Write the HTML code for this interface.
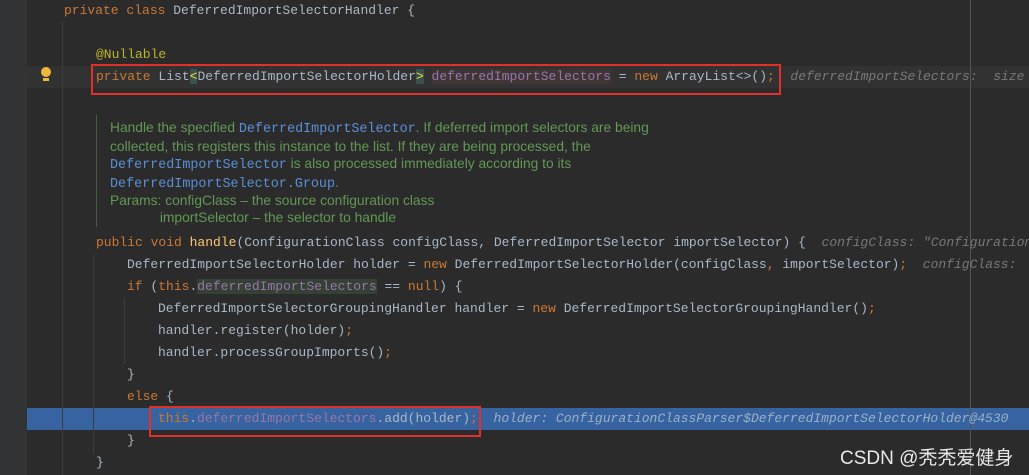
<!DOCTYPE html>
<html><head><meta charset="utf-8"><style>
body{margin:0;width:1029px;height:475px;background:#2b2b2b;overflow:hidden;position:relative;font-family:"Liberation Mono",monospace;font-size:13px;}
.g{position:absolute;left:0;top:0;width:27px;height:475px;background:#313335;}
.l{position:absolute;white-space:pre;color:#a9b7c6;height:22px;line-height:22px;}
.k{color:#cc7832}.a{color:#bbb529}.f{color:#9876aa}.m{color:#ffc66d}.h{color:#787878;font-style:italic}
.d{position:absolute;left:110px;font-family:"Liberation Sans",sans-serif;font-size:13.8px;color:#629755;white-space:pre;line-height:17px}
.d b{font-weight:normal;color:#5a8fd6;font-family:"Liberation Mono",monospace;font-size:13.4px}
.box{position:absolute;border:2px solid #e0302a;}
.vl{position:absolute;width:1px;background:#3c3c3c}
</style></head><body>
<div class="g"></div>
<div style="position:absolute;left:27px;top:66px;width:1002px;height:22px;background:#323232"></div>
<div style="position:absolute;left:27px;top:408px;width:1002px;height:22px;background:#3764a0"></div>
<div style="position:absolute;left:970px;top:0;width:1px;height:475px;background:#555"></div>
<div class="vl" style="left:62px;top:22px;height:453px"></div>
<div class="vl" style="left:93px;top:254px;height:200px"></div>
<div class="vl" style="left:124px;top:298px;height:66px"></div>
<div style="position:absolute;left:96px;top:115px;width:1px;height:112px;background:#4a5a44"></div>
<div style="position:absolute;left:41px;top:67px;width:10px;height:10px;border-radius:50%;background:#f0b73a"></div>
<div style="position:absolute;left:43px;top:78px;width:6px;height:3px;background:#f0b73a"></div>

<div class="l" style="left:64px;top:0"><span class="k">private class </span>DeferredImportSelectorHandler {</div>
<div class="l" style="left:96px;top:44px"><span class="a">@Nullable</span></div>
<div class="l" style="left:96px;top:66px"><span class="k">private </span>List<span style="color:#f0e040;background:#3b514d">&lt;</span>DeferredImportSelectorHolder<span style="color:#f0e040;background:#3b514d">&gt;</span> <span class="f" style="background:#3f3535">deferredImportSelectors</span> = <span class="k">new </span>ArrayList&lt;&gt;()<span class="k">;</span>  <span class="h">deferredImportSelectors:  size</span></div>
<div class="d" style="top:119px">Handle the specified <b>DeferredImportSelector</b>. If deferred import selectors are being
collected, this registers this instance to the list. If they are being processed, the
<b>DeferredImportSelector</b> is also processed immediately according to its
<b>DeferredImportSelector.Group</b>.</div>
<div class="d" style="top:192px">Params: configClass – the source configuration class
             importSelector – the selector to handle</div>
<div class="l" style="left:96px;top:232px"><span class="k">public void </span><span class="m">handle</span>(ConfigurationClass configClass, DeferredImportSelector importSelector) {  <span class="h">configClass: "Configuration</span></div>
<div class="l" style="left:127px;top:254px">DeferredImportSelectorHolder holder = <span class="k">new </span>DeferredImportSelectorHolder(configClass<span class="k">, </span>importSelector)<span class="k">;</span>  <span class="h">configClass:</span></div>
<div class="l" style="left:127px;top:276px"><span class="k">if </span>(<span class="k">this</span>.<span class="f" style="background:#344134">deferredImportSelectors</span> == <span class="k">null</span>) {</div>
<div class="l" style="left:158px;top:298px">DeferredImportSelectorGroupingHandler handler = <span class="k">new </span>DeferredImportSelectorGroupingHandler()<span class="k">;</span></div>
<div class="l" style="left:158px;top:320px">handler.register(holder)<span class="k">;</span></div>
<div class="l" style="left:158px;top:342px">handler.processGroupImports()<span class="k">;</span></div>
<div class="l" style="left:127px;top:364px">}</div>
<div class="l" style="left:127px;top:386px"><span class="k">else </span>{</div>
<div class="l" style="left:158px;top:408px"><span class="k">this</span>.<span class="f">deferredImportSelectors</span>.add(holder)<span class="k">;</span>  <span class="h" style="color:#9ab0c8">holder: ConfigurationClassParser$DeferredImportSelectorHolder@4530</span></div>
<div class="l" style="left:127px;top:430px">}</div>
<div class="l" style="left:96px;top:452px">}</div>

<div class="box" style="left:91px;top:64px;width:686px;height:27px"></div>
<div class="box" style="left:149px;top:406px;width:328px;height:27px"></div>
<div style="position:absolute;left:840px;top:443px;font-family:'Liberation Sans','Noto Sans CJK SC',sans-serif;font-size:19px;color:#e8e8e8;white-space:nowrap">CSDN @秃秃爱健身</div>
</body></html>
